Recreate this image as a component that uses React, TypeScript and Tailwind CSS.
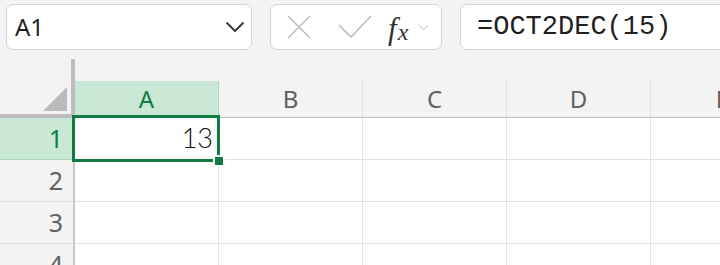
const cols = ['A', 'B', 'C', 'D', 'E']
const rows = [1, 2, 3, 4]

function Chevron({ className }: { className?: string }) {
  return (
    <svg viewBox="0 0 20 12" className={className} fill="none" strokeWidth="1.8" strokeLinecap="round" strokeLinejoin="round">
      <path d="M2 2 L10 10 L18 2" />
    </svg>
  )
}

export default function App() {
  return (
    <div className="relative w-[720px] h-[265px] overflow-hidden bg-[#f3f3f3] font-['Noto_Sans',sans-serif]">
      {/* formula toolbar */}
      <div className="flex h-[56px] items-start gap-[18px] pl-[6px] pt-[4px]">
        <div className="flex h-[46px] w-[246px] shrink-0 items-center justify-between rounded-[7px] border-[1.5px] border-[#d3d3d3] bg-white pl-[8px] pr-[6px]">
          <span className="text-[24px] text-[#1f1f1f]">A1</span>
          <Chevron className="w-[20px] h-[12px] stroke-[#333333]" />
        </div>
        <div className="flex h-[46px] w-[172px] shrink-0 items-center rounded-[7px] border-[1.5px] border-[#d3d3d3] bg-white">
          <svg viewBox="0 0 24 24" className="ml-[16px] w-[24px] h-[24px]" fill="none" stroke="#bdbdbd" strokeWidth="1.6">
            <path d="M1 1 L23 23 M23 1 L1 23" />
          </svg>
          <svg viewBox="0 0 34 24" className="ml-[27px] w-[34px] h-[24px]" fill="none" stroke="#bdbdbd" strokeWidth="1.6">
            <path d="M1 10 L13 22 L33 1" />
          </svg>
          <span className="ml-[16px] mt-[2px] flex items-end font-['Liberation_Serif',serif] italic text-[#333333] leading-none">
            <span className="text-[31px]">f</span>
            <span className="text-[24px] ml-[1px]">x</span>
          </span>
          <Chevron className="ml-[10px] w-[11px] h-[7px] stroke-[#b5b5b5]" />
        </div>
        <div className="flex h-[46px] w-[290px] shrink-0 items-center rounded-[7px] border-[1.5px] border-[#d3d3d3] bg-white pl-[16px]">
          <span className="font-['Liberation_Mono',monospace] text-[27px] text-[#1f1f1f]">=OCT2DEC(15)</span>
        </div>
      </div>

      {/* column headers */}
      <div className="flex h-[62px]">
        <svg width="75" height="62" className="shrink-0">
          <rect x="71" y="3" width="4" height="59" fill="#bdbdbd" />
          <rect x="0" y="58" width="75" height="4" fill="#bdbdbd" />
          <polygon points="43,55 67,55 67,31" fill="#bababa" />
        </svg>
        {cols.map((c, i) => (
          <div key={c} className="flex w-[144px] shrink-0 flex-col">
            <div className="h-[25px]" />
            <div
              className={`flex h-[37px] items-center justify-center border-b border-r text-[24px] ${
                i === 0
                  ? 'bg-[#cae8d6] border-r-[#a9dabd] border-b-[#bdbdbd] text-[#107c41]'
                  : 'border-r-[#e0e0e0] border-b-[#bdbdbd] text-[#616161]'
              }`}
            >
              {c}
            </div>
          </div>
        ))}
      </div>

      {/* rows */}
      {rows.map((r) => (
        <div key={r} className="flex h-[42px]">
          <div
            className={`flex w-[75px] shrink-0 items-center justify-end border-b border-r-2 border-r-[#c8c8c8] pr-[10px] text-[25px] ${
              r === 1 ? 'bg-[#cae8d6] border-b-[#a9dabd] text-[#107c41]' : 'border-b-[#dcdcdc] text-[#616161]'
            }`}
          >
            {r}
          </div>
          {cols.map((c) => (
            <div key={c} className="flex w-[144px] shrink-0 items-center justify-end border-b border-r border-[#e1e1e1] bg-white pr-[5px]">
              {r === 1 && c === 'A' && (
                <span className="font-['Lato',sans-serif] text-[27px] font-light text-[#111111]">13</span>
              )}
            </div>
          ))}
        </div>
      ))}

      {/* active cell */}
      <div className="absolute left-[72px] top-[115px] h-[47px] w-[148px] border-[3px] border-[#107c41]" />
      <div className="absolute left-[213px] top-[155px] h-[12px] w-[12px] border-2 border-white bg-[#107c41]" />
    </div>
  )
}
